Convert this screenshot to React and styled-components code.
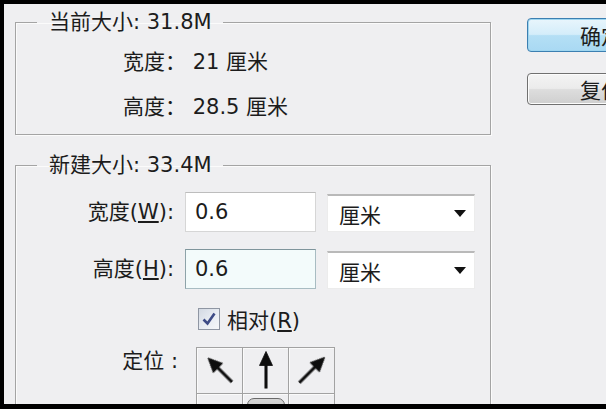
import React from 'react';
import styled, { createGlobalStyle } from 'styled-components';

const Global = createGlobalStyle`
    html, body { margin: 0; padding: 0; background: #efeff1; }
    body { font-family: "DejaVu Sans", "Noto Sans CJK SC", sans-serif; }
`;

const Frame = styled.div`
    width: 606px;
    height: 409px;
    box-sizing: border-box;
    border-top: 4px solid #000;
    border-left: 4px solid #000;
    border-bottom: 5px solid #000;
    background: #efeff1;
    display: flex;
    overflow: hidden;
    color: #1c1c1c;
    font-family: "DejaVu Sans", "Noto Sans CJK SC", sans-serif;
    font-size: 21px;
`;

const LeftCol = styled.div`
    flex: none;
    width: 476px;
    padding: 7px 0 0 11px;
    display: flex;
    flex-direction: column;
    gap: 19px;
`;

const RightCol = styled.div`
    flex: none;
    margin-left: 36px;
    padding-top: 14px;
    display: flex;
    flex-direction: column;
    gap: 21px;
`;

const Group = styled.fieldset`
    margin: 0;
    min-width: 0;
    padding: ${p => p.$pad};
    border: 1px solid #a4a4a4;
    box-shadow: inset 1px 1px 0 #fbfbfb, 1px 1px 0 #fbfbfb;
`;

const Legend = styled.legend`
    margin-left: 21px;
    padding: 0 11px 0 12px;
    line-height: 22px;
    white-space: nowrap;
`;

const InfoList = styled.div`
    padding: 7px 0 4px 107px;
`;

const InfoRow = styled.div`
    height: 45px;
    line-height: 45px;
    white-space: nowrap;
`;

const Row = styled.div`
    display: flex;
    align-items: ${p => p.$top ? 'flex-start' : 'center'};
    margin-top: ${p => p.$mt || 0}px;
`;

const Label = styled.div`
    flex: none;
    box-sizing: border-box;
    width: 167px;
    padding: ${p => p.$pt || 0}px ${p => p.$pr ?? 9}px 0 0;
    text-align: right;
    white-space: nowrap;
    line-height: 24px;
`;

const Key = styled.span`
    text-decoration: underline;
    text-underline-offset: 2px;
`;

const Input = styled.div`
    flex: none;
    box-sizing: border-box;
    width: 131px;
    height: 40px;
    margin-left: 2px;
    padding-left: 9px;
    display: flex;
    align-items: center;
    background: ${p => p.$hover ? '#f3fbfb' : '#fff'};
    border: 1px solid ${p => p.$hover ? '#a8bcc2' : '#d6d6d6'};
    border-top-color: ${p => p.$hover ? '#7f959c' : '#bdbdbd'};
    border-left-color: ${p => p.$hover ? '#8ea3a9' : '#d6d6d6'};
`;

const Select = styled.div`
    flex: none;
    box-sizing: border-box;
    width: 148px;
    height: 38px;
    margin: 2px 0 0 11px;
    padding: 0 8px 0 11px;
    display: flex;
    align-items: center;
    justify-content: space-between;
    background: #fff;
    border: 1px solid #ececec;
    border-top: 2px solid #b9b9b9;
`;

const Caret = styled.span`
    width: 0;
    height: 0;
    border-left: 6px solid transparent;
    border-right: 6px solid transparent;
    border-top: 7px solid #111;
`;

const CheckRow = styled.label`
    display: flex;
    align-items: center;
    gap: 7px;
    margin: 18px 0 0 182px;
    height: 24px;
    white-space: nowrap;
`;

const Box = styled.span`
    box-sizing: border-box;
    width: 22px;
    height: 22px;
    border: 1px solid #8f96a3;
    background: linear-gradient(135deg, #d3d9e3, #eaeef4 60%, #f6f7f9);
    display: flex;
    align-items: center;
    justify-content: center;
`;

const Anchor = styled.div`
    margin-left: 13px;
    display: grid;
    grid-template-columns: repeat(3, 46px);
    grid-auto-rows: 46px;
    border-top: 1px solid #a2a2a2;
    border-left: 1px solid #a2a2a2;
`;

const Cell = styled.div`
    box-sizing: border-box;
    border-right: 1px solid #a2a2a2;
    border-bottom: 1px solid #a2a2a2;
    box-shadow: inset 1px 1px 0 #fafafa;
    display: flex;
    align-items: flex-start;
    justify-content: center;
`;

const CenterMark = styled.div`
    margin-top: 4px;
    width: 36px;
    height: 34px;
    border: 1px solid #6a6a6a;
    border-radius: 7px;
    background: linear-gradient(#d6d6d6, #a9a9a9);
`;

const Button = styled.div`
    box-sizing: border-box;
    flex: none;
    width: 148px;
    height: ${p => p.$h}px;
    border-radius: 4px;
    display: flex;
    align-items: center;
    justify-content: center;
    white-space: nowrap;
    border: 1px solid ${p => p.$primary ? '#3c7fb1' : '#707070'};
    background: ${p => p.$primary
        ? 'linear-gradient(#e8f5fc, #d4edfa 48%, #b4dff5 52%, #a9d9f3)'
        : 'linear-gradient(#f4f4f4, #ebebeb 48%, #dddddd 52%, #cfcfcf)'};
    box-shadow: inset 0 0 0 1px ${p => p.$primary ? '#9fd6f0' : '#fcfcfc'};
`;

const Arrow = ({ deg, len }) => {
    const top = 22 - len / 2;
    return (
        <svg width="44" height="44" viewBox="0 0 44 44">
            <defs>
                <filter id="soft" x="-20%" y="-20%" width="140%" height="140%">
                    <feGaussianBlur stdDeviation="0.6" />
                </filter>
            </defs>
            <g transform={`rotate(${deg} 22 22)`} fill="#0d0d0d" stroke="#0d0d0d" filter="url(#soft)">
                <line x1="22" y1={22 + len / 2} x2="22" y2={top + 8} strokeWidth="3" />
                <polygon points={`22,${top} 15.5,${top + 14} 28.5,${top + 14}`} strokeWidth="0.8" />
            </g>
        </svg>
    );
};

const App = () => {
    return (
        <Frame>
            <Global />
            <LeftCol>
                <Group $pad="0">
                    <Legend>当前大小: 31.8M</Legend>
                    <InfoList>
                        <InfoRow>宽度： 21 厘米</InfoRow>
                        <InfoRow>高度： 28.5 厘米</InfoRow>
                    </InfoList>
                </Group>

                <Group $pad="16px 0 0 0">
                    <Legend>新建大小: 33.4M</Legend>
                    <Row>
                        <Label>宽度(<Key>W</Key>):</Label>
                        <Input>0.6</Input>
                        <Select>厘米<Caret /></Select>
                    </Row>
                    <Row $mt={17}>
                        <Label>高度(<Key>H</Key>):</Label>
                        <Input $hover>0.6</Input>
                        <Select>厘米<Caret /></Select>
                    </Row>
                    <CheckRow>
                        <Box>
                            <svg width="16" height="16" viewBox="0 0 16 16">
                                <path d="M2.5 8.5 L6.5 12.5 L13.5 2.5" fill="none" stroke="#3d4b86" strokeWidth="2.6" />
                            </svg>
                        </Box>
                        <span>相对(<Key>R</Key>)</span>
                    </CheckRow>
                    <Row $top $mt={16}>
                        <Label $pt={2} $pr={5}>定位 :</Label>
                        <Anchor>
                            <Cell><Arrow deg={-45} len={34} /></Cell>
                            <Cell><Arrow deg={0} len={37} /></Cell>
                            <Cell><Arrow deg={45} len={36} /></Cell>
                            <Cell />
                            <Cell><CenterMark /></Cell>
                            <Cell />
                        </Anchor>
                    </Row>
                </Group>
            </LeftCol>
            <RightCol>
                <Button $primary $h={34}>确定</Button>
                <Button $h={32}>复位</Button>
            </RightCol>
        </Frame>
    );
};

export default App;
